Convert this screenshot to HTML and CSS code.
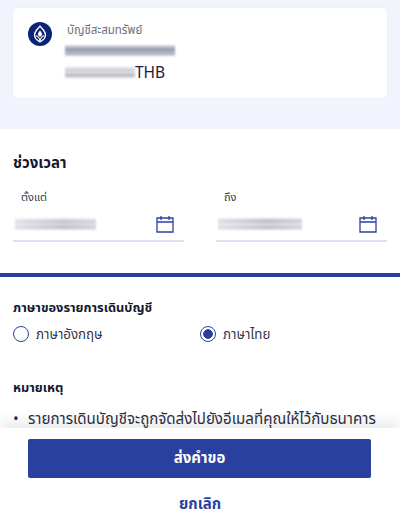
FILE: index.html
```html
<!DOCTYPE html>
<html lang="th">
<head>
<meta charset="utf-8">
<title>ขอรายการเดินบัญชี</title>
<link rel="stylesheet" href="styles.css">
</head>
<body>
<div class="page">
  <section class="account">
    <div class="card">
      <svg class="logo" viewBox="0 0 24 24" aria-hidden="true">
        <circle cx="12" cy="12" r="12" fill="#0d2374"/>
        <path d="M12 4.200C10 7 6.500 9 6.500 13c0 3.300 2.500 5.300 5.500 6.800 3-1.500 5.500-3.500 5.500-6.800 0-4-3.500-6-5.500-8.800z" fill="none" stroke="#fff" stroke-width="1.300"/>
        <path d="M7.500 13.800c2.300.3 4 2 4.500 5.200.5-3.200 2.200-4.900 4.500-5.200" fill="none" stroke="#fff" stroke-width="1.100"/>
        <path d="M12 8.500c-1.200 1.500-2.100 2.700-2.100 3.800 0 .9 1 1.700 2.100 2.800 1.100-1.100 2.100-1.900 2.100-2.800 0-1.100-.9-2.300-2.100-3.800z" fill="#fff"/>
      </svg>
      <div class="acct-info">
        <div class="acct-type">บัญชีสะสมทรัพย์</div>
        <div class="mask mask-name"></div>
        <div class="balance"><span class="mask mask-bal"></span><span class="cur">THB</span></div>
      </div>
    </div>
  </section>
  <section class="period">
    <h2 class="title">ช่วงเวลา</h2>
    <div class="dates">
      <div class="date">
        <div class="date-label">ตั้งแต่</div>
        <div class="date-row">
          <span class="mask mask-date"></span>
          <svg class="cal" viewBox="0 0 18 18" aria-hidden="true"><path d="M1 3h16v14H1zM1 7h16M5 1v4M13 1v4" fill="none" stroke="#2a43a0" stroke-width="1.300"/></svg>
        </div>
      </div>
      <div class="date">
        <div class="date-label">ถึง</div>
        <div class="date-row">
          <span class="mask mask-date2"></span>
          <svg class="cal" viewBox="0 0 18 18" aria-hidden="true"><path d="M1 3h16v14H1zM1 7h16M5 1v4M13 1v4" fill="none" stroke="#2a43a0" stroke-width="1.300"/></svg>
        </div>
      </div>
    </div>
  </section>
  <section class="lang">
    <h2 class="title small">ภาษาของรายการเดินบัญชี</h2>
    <div class="radios">
      <div class="radio-item"><span class="radio"></span><span class="radio-text">ภาษาอังกฤษ</span></div>
      <div class="radio-item"><span class="radio on"></span><span class="radio-text">ภาษาไทย</span></div>
    </div>
    <h2 class="title small note">หมายเหตุ</h2>
    <div class="bullet"><span class="dot">•</span><span>รายการเดินบัญชีจะถูกจัดส่งไปยังอีเมลที่คุณให้ไว้กับธนาคาร</span></div>
  </section>
  <footer class="footer">
    <button class="submit">ส่งคำขอ</button>
    <button class="cancel">ยกเลิก</button>
  </footer>
</div>
</body>
</html>
```
FILE: styles.css
```css
* { box-sizing: border-box; }
html, body { margin: 0; height: 100%; }
body { font-family: "Noto Sans", "Noto Sans Thai", "Liberation Sans", sans-serif; color: #1d2238; background: #fff; overflow: hidden; }
.page { position: relative; width: 400px; height: 520px; overflow: hidden; display: flex; flex-direction: column; }
.account { background: #f1f4fd; height: 129px; padding: 8px 13px 0; }
.card { background: #fff; height: 90px; border-radius: 4px; padding: 14px 15px; display: flex; gap: 13px; box-shadow: 0 0 2px rgba(30,50,120,.08); }
.logo { width: 24px; height: 24px; flex: none; }
.acct-info { display: flex; flex-direction: column; align-items: flex-start; }
.acct-type { font-size: 11.500px; line-height: 16px; color: #6b6f7c; margin-left: 2px; }
.mask { display: block; filter: blur(1px); }
.mask-name { width: 110px; height: 11px; margin-top: 7px; background: linear-gradient(#e4e5ea, #b0b2bf 25%, #8f92a3 45%, #bcbeca 65%, #a6a8b6 80%, #e0e1e6); }
.balance { display: flex; align-items: center; margin-top: 6px; }
.mask-bal { width: 70px; height: 11px; background: linear-gradient(#eceef2, #c9cbd4 30%, #e3e4e9 50%, #b0b2bf 75%, #e6e7eb); }
.cur { font-size: 15.500px; line-height: 20px; color: #1a2140; }
.period { height: 144px; padding: 23px 13px 0; }
.title { margin: 0; font-size: 15px; line-height: 20px; font-weight: 700; color: #14182e; }
.title.small { font-size: 12.800px; line-height: 18px; }
.dates { display: flex; gap: 32px; margin-top: 17px; }
.date { width: 171px; }
.date-label { font-size: 11px; line-height: 16px; margin-left: 8px; color: #33374a; }
.date-row { height: 37px; padding: 13px 10px 0 2px; display: flex; justify-content: space-between; border-bottom: 2px solid #dde1f3; }
.mask-date { width: 81px; height: 12px; background: linear-gradient(90deg, rgba(255,255,255,.5), rgba(255,255,255,0) 60%, rgba(255,255,255,.3)), linear-gradient(#f0f0f3, #bcbec9 30%, #d8d9df 55%, #b4b6c2 80%, #ecedf0); }
.mask-date2 { width: 84px; height: 12px; background: linear-gradient(90deg, rgba(255,255,255,.5), rgba(255,255,255,0) 60%, rgba(255,255,255,.3)), linear-gradient(#e6e7eb, #b4b6c2 25%, #dcdde2 55%, #b4b6c2 80%, #e8e9ec); }
.cal { width: 18px; height: 18px; margin-top: -3px; }
.lang { border-top: 4px solid #2a409f; padding: 21px 13px 0; flex: 1; }
.radios { display: flex; margin-top: 9px; }
.radio-item { width: 187px; display: flex; align-items: center; gap: 7px; }
.radio { width: 16px; height: 16px; border: 1.300px solid #2a43a0; border-radius: 50%; background: #fff; flex: none; }
.radio.on { background: radial-gradient(circle, #2a409f 0 4.500px, #fff 5px); }
.radio-text { font-size: 13.300px; line-height: 18px; color: #33374a; }
.note { margin-top: 35px; }
.bullet { display: flex; gap: 9px; margin-top: 12px; font-size: 15.100px; line-height: 20px; white-space: nowrap; color: #2b2f44; }
.dot { width: 6px; }
.footer { position: absolute; left: 0; right: 0; bottom: 0; height: 92px; background: #fff; box-shadow: 0 -6px 14px rgba(0,0,0,.09); display: flex; flex-direction: column; align-items: center; padding-top: 11px; }
.submit { width: 343px; height: 39px; margin-left: -1px; border: 0; border-radius: 2px; background: #29409f; color: #fff; font: inherit; font-size: 15px; font-weight: 700; }
.cancel { border: 0; background: none; color: #29409f; font: inherit; font-size: 15px; font-weight: 700; margin-top: 15px; line-height: 20px; padding: 0; }
```
